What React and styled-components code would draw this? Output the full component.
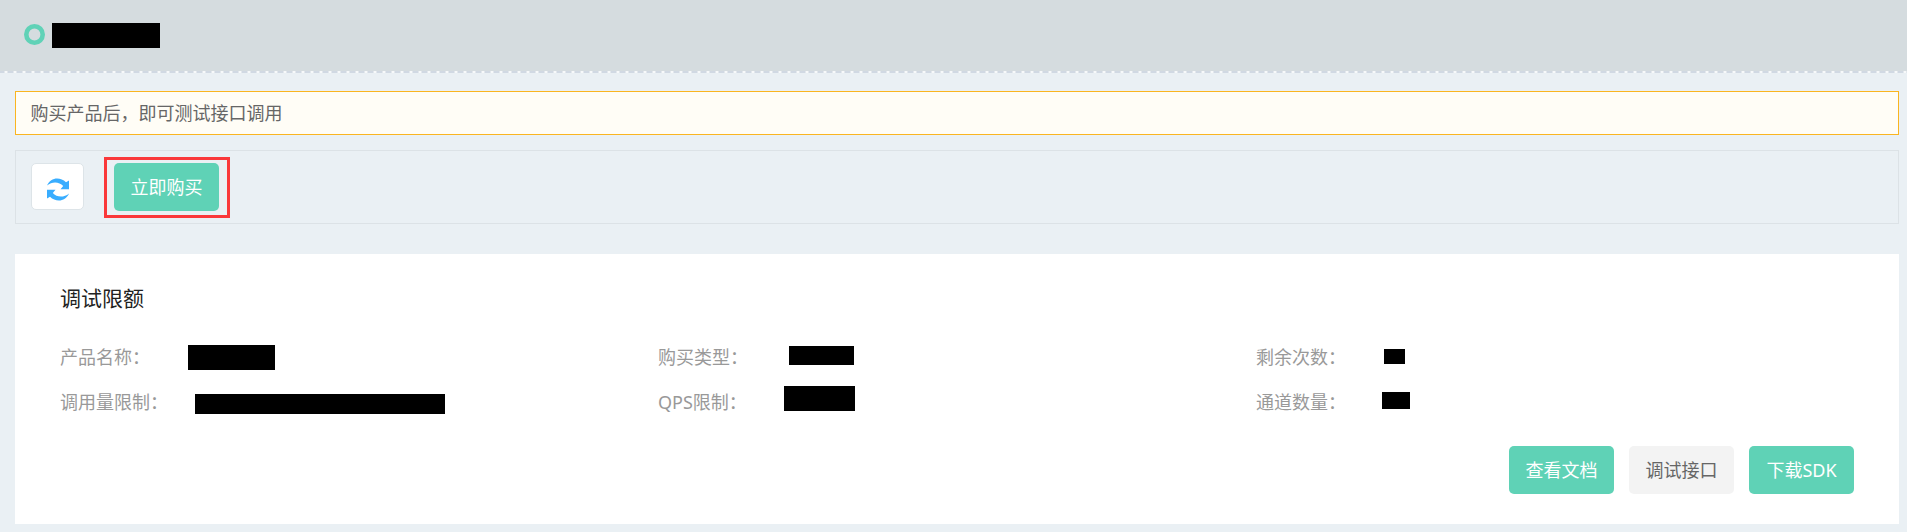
import React from "react";
import styled, { createGlobalStyle } from "styled-components";

const GlobalStyle = createGlobalStyle`
  * { box-sizing: border-box; }
  body {
    margin: 0;
    background: #eaf0f4;
    color: #666;
    font: 400 18px/24px "Noto Sans", "Noto Sans CJK SC", sans-serif;
  }
`;

const Page = styled.div`
  height: 532px;
  overflow: hidden;
`;

const Header = styled.header`
  display: flex;
  align-items: flex-start;
  height: 73px;
  padding: 23px 24px 0;
  background:
    repeating-linear-gradient(90deg, #d1d9e3 0 4px, #e3e8ed 4px 5px, #f7f9fa 5px 7px, #e3e8ed 7px 8px, #d1d9e3 8px 9px) 0 100% / 100% 2px no-repeat,
    #d5dcdf;
`;

const Ring = styled.svg`
  width: 21px;
  height: 21px;
  margin: 1px 7px 0 0;
  fill: none;
  stroke: #60d2b7;
  stroke-width: 4.6px;
`;

const Mask = styled.span`
  flex: none;
  width: ${(p) => p.$w}px;
  height: ${(p) => p.$h}px;
  margin: ${(p) => p.$top || 0}px 0 0 ${(p) => p.$left || 0}px;
  background: #000;
`;

const Content = styled.main`
  padding: 18px 8px 0 15px;
`;

const Notice = styled.div`
  height: 44px;
  padding: 0 14.5px;
  border: 1px solid #fab520;
  background: #fffdf6;
  line-height: 43px;
`;

const Toolbar = styled.div`
  display: flex;
  align-items: flex-start;
  height: 74px;
  margin-top: 15px;
  padding: 6px 15px;
  border: 1px solid #dce2e6;
`;

const RefreshButton = styled.button`
  display: flex;
  width: 53px;
  height: 47px;
  margin: 6px 20px 0 0;
  padding: 14px 0 0 15px;
  border: 1px solid #dde4e8;
  border-radius: 5px;
  background: #fff;
`;

const Highlight = styled.div`
  height: 61px;
  padding: 3px 8px 4px 7px;
  border: 3px solid #fa383a;
`;

const Button = styled.button`
  display: block;
  width: 105px;
  height: 48px;
  padding: 0;
  border: 0;
  border-radius: 5px;
  background: ${(p) => (p.$muted ? "#f3f3f3" : "#5fd2b6")};
  color: ${(p) => (p.$muted ? "#666" : "#fff")};
  font: inherit;
  line-height: 48px;
  text-align: center;
`;

const Card = styled.section`
  height: 270px;
  margin-top: 30px;
  padding: 29px 45px;
  background: #fff;
`;

const Title = styled.h2`
  margin: 0 0 22px;
  color: #222;
  font-size: 21px;
  font-weight: 400;
  line-height: 30px;
`;

const Fields = styled.div`
  display: grid;
  grid-template-columns: repeat(3, 1fr);
  grid-auto-rows: 45px;
`;

const Field = styled.div`
  display: flex;
  align-items: flex-start;
`;

const Label = styled.span`
  flex: none;
  width: 120px;
  color: #999;
  line-height: 44px;
  white-space: nowrap;
`;

const Actions = styled.div`
  display: flex;
  justify-content: flex-end;
  gap: 15px;
  margin-top: 21px;
`;

const fields = [
  { label: "产品名称：", w: 87, h: 25, left: 8, top: 10 },
  { label: "购买类型：", w: 65, h: 19, left: 11, top: 11 },
  { label: "剩余次数：", w: 21, h: 15, left: 8, top: 14 },
  { label: "调用量限制：", w: 250, h: 20, left: 15, top: 14 },
  { label: "QPS限制：", w: 71, h: 25, left: 6, top: 6 },
  { label: "通道数量：", w: 28, h: 17, left: 6, top: 12 },
];

const RefreshIcon = () => (
  <svg width="22" height="23" viewBox="0 0 22 23" fill="#38adff" aria-hidden="true">
    <path d="M0 7.5C3.5-.8 13-1.6 19 4.2L22 2.5V11.2H13.5L16.2 8C12.5 3.8 5.5 2.8 0 7.5Z" />
    <path d="M22 15.5C18.5 23.8 9 24.6 3 18.8L0 20.5V11.8H8.5L5.8 15C9.5 19.2 16.5 20.2 22 15.5Z" />
  </svg>
);

export default function App() {
  return (
    <Page>
      <GlobalStyle />
      <Header>
        <Ring viewBox="0 0 21 21" aria-hidden="true">
          <circle cx="10.5" cy="10.5" r="8.2" />
        </Ring>
        <Mask $w={108} $h={25} />
      </Header>
      <Content>
        <Notice>购买产品后，即可测试接口调用</Notice>
        <Toolbar>
          <RefreshButton aria-label="刷新">
            <RefreshIcon />
          </RefreshButton>
          <Highlight>
            <Button>立即购买</Button>
          </Highlight>
        </Toolbar>
        <Card>
          <Title>调试限额</Title>
          <Fields>
            {fields.map((f) => (
              <Field key={f.label}>
                <Label>{f.label}</Label>
                <Mask $w={f.w} $h={f.h} $left={f.left} $top={f.top} />
              </Field>
            ))}
          </Fields>
          <Actions>
            <Button>查看文档</Button>
            <Button $muted>调试接口</Button>
            <Button>下载SDK</Button>
          </Actions>
        </Card>
      </Content>
    </Page>
  );
}
